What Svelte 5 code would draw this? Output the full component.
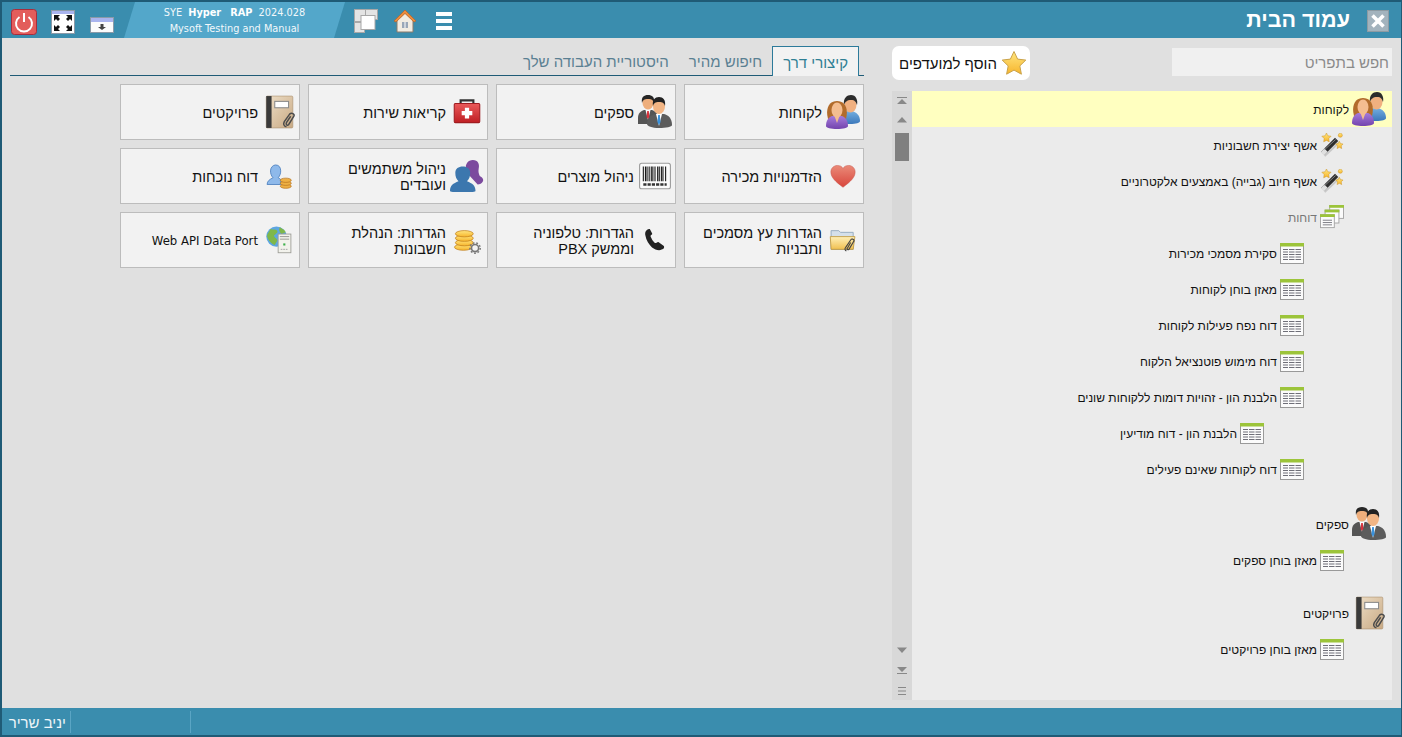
<script>
  const tiles = [
    { icon: "customers", label: "לקוחות" },
    { icon: "suppliers", label: "ספקים" },
    { icon: "medkit", label: "קריאות שירות" },
    { icon: "notebook", label: "פרויקטים" },
    { icon: "heart", label: "הזדמנויות מכירה" },
    { icon: "barcode", label: "ניהול מוצרים" },
    { icon: "people", label: "ניהול משתמשים ועובדים" },
    { icon: "attendance", label: "דוח נוכחות" },
    { icon: "folder", label: "הגדרות עץ מסמכים ותבניות" },
    { icon: "phone", label: "הגדרות: טלפוניה וממשק PBX" },
    { icon: "coins", label: "הגדרות: הנהלת חשבונות" },
    { icon: "globe", label: "Web API Data Port" }
  ];

  const tabs = ["קיצורי דרך", "חיפוש מהיר", "היסטוריית העבודה שלך"];

  const groups = [
    {
      icon: "customers",
      label: "לקוחות",
      active: true,
      gap: 0,
      rows: [
        { level: 1, icon: "wand", label: "אשף יצירת חשבוניות" },
        { level: 1, icon: "wand", label: "אשף חיוב (גבייה) באמצעים אלקטרוניים" },
        { level: 1, icon: "stack", label: "דוחות", muted: true },
        { level: 2, icon: "table", label: "סקירת מסמכי מכירות" },
        { level: 2, icon: "table", label: "מאזן בוחן לקוחות" },
        { level: 2, icon: "table", label: "דוח נפח פעילות לקוחות" },
        { level: 2, icon: "table", label: "דוח מימוש פוטנציאל הלקוח" },
        { level: 2, icon: "table", label: "הלבנת הון - זהויות דומות ללקוחות שונים" },
        { level: 3, icon: "table", label: "הלבנת הון - דוח מודיעין" },
        { level: 2, icon: "table", label: "דוח לקוחות שאינם פעילים" }
      ]
    },
    {
      icon: "suppliers",
      label: "ספקים",
      gap: 19,
      rows: [{ level: 1, icon: "table", label: "מאזן בוחן ספקים" }]
    },
    {
      icon: "notebook",
      label: "פרויקטים",
      gap: 17,
      rows: [{ level: 1, icon: "table", label: "מאזן בוחן פרויקטים" }]
    }
  ];
</script>

<svg class="defs" width="0" height="0" aria-hidden="true">
  <defs>
    <linearGradient id="gold" x1="0" y1="0" x2="0" y2="1">
      <stop offset="0" stop-color="#ffe680" />
      <stop offset="1" stop-color="#f7b52c" />
    </linearGradient>
    <linearGradient id="redbox" x1="0" y1="0" x2="0" y2="1">
      <stop offset="0" stop-color="#ea5a5a" />
      <stop offset="1" stop-color="#bf1f24" />
    </linearGradient>
    <linearGradient id="tan" x1="0" y1="0" x2="1" y2="1">
      <stop offset="0" stop-color="#eedfc8" />
      <stop offset="1" stop-color="#c9aa84" />
    </linearGradient>
    <linearGradient id="heartfill" x1="0" y1="0" x2="0" y2="1">
      <stop offset="0" stop-color="#ea8a78" />
      <stop offset="1" stop-color="#d8453c" />
    </linearGradient>
    <linearGradient id="folderfill" x1="0" y1="0" x2="0" y2="1">
      <stop offset="0" stop-color="#fff0b8" />
      <stop offset="1" stop-color="#f0c050" />
    </linearGradient>
    <linearGradient id="blueman" x1="0" y1="0" x2="0" y2="1">
      <stop offset="0" stop-color="#74aee0" />
      <stop offset="1" stop-color="#3b78bb" />
    </linearGradient>
    <linearGradient id="purple" x1="0" y1="0" x2="0" y2="1">
      <stop offset="0" stop-color="#a57bdb" />
      <stop offset="1" stop-color="#7343ad" />
    </linearGradient>
  </defs>

  <symbol id="customers" viewBox="0 0 34 34">
    <path d="M14 25c0-5 4-8 8-9h4c4 1 8 4 8 10 0 2-4 3-10 3s-10-2-10-4z" fill="url(#blueman)" />
    <ellipse cx="24.500" cy="10" rx="6" ry="7.500" fill="#f0b080" />
    <path d="M18 10c-1-7 3-10 7-10 5 0 7 5 6 10-1-3-2-5-6-5s-6 2-7 5z" fill="#2c2c2c" />
    <path d="M2 24C-1 12 4 6 11 6s12 6 9 18z" fill="#b26c2c" />
    <path d="M0 31c0-6 3-9 6-10h10c3 1 6 4 6 10 0 2-5 3-11 3S0 33 0 31z" fill="url(#purple)" />
    <ellipse cx="11" cy="15" rx="5.500" ry="7.500" fill="#f4bd90" />
    <path d="M8.500 21h5L11 28z" fill="#f4bd90" />
  </symbol>

  <symbol id="suppliers" viewBox="0 0 34 34">
    <path d="M0 23c0-5 3-7 6-8h8c3 1 6 3 6 8v6H0z" fill="#555" />
    <path d="M7.500 15h5L10 25z" fill="#fff" />
    <path d="M9.200 16h1.600l.6 6-1.400 2-1.400-2z" fill="#d8323c" />
    <ellipse cx="10" cy="8" rx="5.500" ry="6.500" fill="#eeae7c" />
    <path d="M4 8c-1-6 2-8 6-8s7 2 6 8c-1-3-2-4-6-4S5 5 4 8z" fill="#262626" />
    <path d="M9 29c0-6 4-9 8-10h9c4 1 8 4 8 11 0 2-6 3-13 3S9 31 9 29z" fill="#5c5c5c" />
    <path d="M18 19h6l-3 12z" fill="#fff" />
    <path d="M20.200 20h1.600l.8 7-1.600 3-1.600-3z" fill="#3a92dc" />
    <ellipse cx="21" cy="11.500" rx="6" ry="7.500" fill="#f2b584" />
    <path d="M15 11c-1-6 2-9 6-9s7 3 6 9c-1-3-2-4-6-4s-5 1-6 4z" fill="#222" />
  </symbol>

  <symbol id="medkit" viewBox="0 0 32 32">
    <path d="M10 9V5h12v4" fill="none" stroke="#333" stroke-width="2" />
    <rect x="4" y="8" width="24" height="18" rx="1" fill="url(#redbox)" stroke="#a01c20" />
    <path d="M14 12h4v3h3v4h-3v3h-4v-3h-3v-4h3z" fill="#fff" />
  </symbol>

  <symbol id="notebook" viewBox="-2 0 32 32">
    <rect x="2" y="1" width="25" height="30" rx="1" fill="url(#tan)" stroke="#ad9474" stroke-width=".6" />
    <rect x="2" y="1" width="5" height="30" fill="#3a3a3a" />
    <rect x="10" y="6" width="13" height="6" fill="#fff" stroke="#8a8a8a" />
    <path d="M21 30c-3-1-3-3-2-5l5-7c2-2 5 0 4 2l-5 8c-1 1-3 0-2-2l4-6" fill="none" stroke="#4c4c4c" stroke-width="1.400" />
  </symbol>

  <symbol id="heart" viewBox="-5 -5 42 42">
    <path d="M16 30C7 23 1 18 1 11c0-5 4-8 8-8 3 0 6 1 7 4 1-3 4-4 7-4 4 0 8 3 8 8 0 7-6 12-15 19z" fill="url(#heartfill)" stroke="#c8544a" stroke-width=".6" />
  </symbol>

  <symbol id="barcode" viewBox="0 0 32 32">
    <rect x="1.500" y="4" width="29" height="24" rx="2" fill="#fbfbfb" stroke="#9a9a9a" />
    <path d="M5 7v14M7 7v14M8.500 7v14M10.500 7v14M12.500 7v14M14 7v14M16 7v14M18.500 7v14M20 7v14M22 7v14M23.500 7v14M26 7v14" stroke="#111" stroke-width="1" />
    <path d="M5 24h22" stroke="#333" stroke-width="2.500" stroke-dasharray="3 1" />
  </symbol>

  <symbol id="people" viewBox="0 0 32 32">
    <path d="M15 10c-1-5 2-9 6.500-9 5 0 6.500 4 5.500 8-.5 3 0 5 1 7 2 1 4 3 3 5-1 2-3 3-5 3l-11-12z" fill="#7c4a9e" />
    <path d="M0 30c0-5 3-7 8-9-2-2-3-4-3-8 0-4 3-6 7-6 4 0 7 2 7 6 0 4-1 6-3 8 5 2 8 4 8 9 0 1-3 1-12 1S0 31 0 30z" fill="#3c77ae" />
  </symbol>

  <symbol id="attendance" viewBox="-4 -4 40 40">
    <path d="M2 26c0-4 3-6 7-8-2-2-3-5-3-8 0-4 3-7 6-7 4 0 6 3 6 7 0 3-1 6-3 8l3 2v6z" fill="#8eb9ea" stroke="#4d7fbe" />
    <g fill="#eeb044" stroke="#b4701c" stroke-width=".8">
      <ellipse cx="24" cy="28" rx="6.500" ry="2.500" />
      <ellipse cx="24" cy="24.500" rx="6.500" ry="2.500" />
      <ellipse cx="24" cy="21" rx="6.500" ry="2.500" />
    </g>
  </symbol>

  <symbol id="folder" viewBox="-4 -4 40 40">
    <path d="M2 5h9l2 2h15v20H2z" fill="#d5e0ea" stroke="#8ea5bb" />
    <path d="M1 12h29l-2 15H2z" fill="url(#folderfill)" stroke="#c09a40" />
    <path d="M20 29c-2-1-2-3-1-4l6-9c1-2 4-1 4 1l-6 10c-1 1-3 0-2-1l4-7" fill="none" stroke="#444" stroke-width="1.300" />
  </symbol>

  <symbol id="phone" viewBox="-7 -7 46 46">
    <path d="M8 1C4 2 2 5 3 10c1 7 5 12 9 16 4 3 9 5 13 3 3-1 4-3 3-5l-7-5c-2-1-3 2-5 1-2-1-5-6-6-9 0-2 3-2 2-4L9 1z" fill="#222" />
  </symbol>

  <symbol id="coins" viewBox="-3 -3 38 38">
    <g fill="url(#gold)" stroke="#c07c18" stroke-width=".8">
      <ellipse cx="12" cy="24" rx="10" ry="3.500" />
      <ellipse cx="13" cy="19" rx="10" ry="3.500" />
      <ellipse cx="13" cy="14" rx="10" ry="3.500" />
      <ellipse cx="13" cy="9" rx="10" ry="3.500" />
    </g>
    <circle cx="25" cy="25" r="4" fill="#f2f2f2" stroke="#777" stroke-width="1.800" />
    <circle cx="25" cy="25" r="5.800" fill="none" stroke="#777" stroke-width="1.600" stroke-dasharray="2 2" />
  </symbol>

  <symbol id="globe" viewBox="-4 -4 40 40">
    <circle cx="13" cy="12" r="12" fill="#5da6e2" />
    <path d="M6 3c3 1 6 0 8 2 1 3-3 4-4 6 1 3 4 3 4 6l-3 5C5 19 2 14 2 10zM17 1c3 2 6 3 7 6l-5 2c-2-2-4-5-2-8z" fill="#7fb84a" />
    <rect x="15" y="9" width="15" height="22" fill="#f2f2ec" stroke="#9a9a94" />
    <path d="M17 12h11M17 15h11" stroke="#8b8b85" />
    <rect x="21" y="20" width="2.500" height="2.500" fill="#3db04a" />
    <path d="M18 27h8" stroke="#999" stroke-dasharray="2 1" />
  </symbol>

  <symbol id="wand" viewBox="0 0 26 26">
    <path d="M5 25L21 10" stroke="#c8c8c8" stroke-width="2" />
    <path d="M3 22L18 7" stroke="#2e2e2e" stroke-width="5" />
    <path d="M2.500 22.500l4-4" stroke="#e0e0e0" stroke-width="5" />
    <path d="M5 18L17 7" stroke="#888" stroke-width="1" />
    <path d="M7 0l1.500 3 3.500.5-2.500 2.500.5 3.500L7 8l-3 1.500.5-3.500L2 3.500 5.500 3z" fill="url(#gold)" stroke="#c89020" stroke-width=".5" />
    <path d="M21 9l1.300 2.500 2.700.4-2 2 .5 3-2.500-1.400-2.500 1.400.5-3-2-2 2.700-.4z" fill="url(#gold)" stroke="#c89020" stroke-width=".5" />
    <circle cx="22" cy="2.500" r="2.200" fill="url(#gold)" stroke="#c89020" stroke-width=".5" />
  </symbol>

  <symbol id="table" viewBox="0 0 24 24">
    <rect x=".500" y="2.500" width="23" height="20" fill="#fbfbfb" stroke="#999" />
    <rect x="0" y="2" width="24" height="3.500" fill="#9cc43a" />
    <path d="M3 8.500h18M3 11h18M3 13.500h18M3 16h18M3 18.500h18" stroke="#6f6f78" />
    <path d="M8.500 7v13M15 7v13" stroke="#fbfbfb" />
  </symbol>

  <symbol id="stack" viewBox="0 0 26 26">
    <rect x="10.500" y=".500" width="15" height="14" fill="#fbfbfb" stroke="#a3a3a3" />
    <rect x="10" y="0" width="16" height="3" fill="#9cc43a" />
    <rect x="5.500" y="5.500" width="15" height="14" fill="#fbfbfb" stroke="#a3a3a3" />
    <rect x="5" y="5" width="16" height="3" fill="#9cc43a" />
    <rect x=".500" y="10.500" width="15" height="14" fill="#fbfbfb" stroke="#a3a3a3" />
    <rect x="0" y="10" width="16" height="3" fill="#9cc43a" />
    <path d="M3 16.500h10M3 19h10M3 21.500h10" stroke="#77777f" />
  </symbol>
</svg>

<div class="app">
  <header class="topbar">
    <div class="tools">
      <button class="power" aria-label="כיבוי">
        <svg viewBox="0 0 26 26" width="26" height="26">
          <rect x=".500" y=".500" width="25" height="25" rx="3" fill="#e35d5b" stroke="#a82c3c" />
          <path d="M8.500 8a8 8 0 1 0 9 0" fill="none" stroke="#fff" stroke-width="2" />
          <path d="M13 4v9" stroke="#fff" stroke-width="2" />
        </svg>
      </button>
      <svg class="full" viewBox="0 0 24 24" width="24" height="24">
        <rect x=".500" y=".500" width="23" height="23" fill="#fff" stroke="#8a9aa8" />
        <rect x="1" y="1" width="22" height="3" fill="#a9b4ee" />
        <path d="M3 6h6l-2 2 2 2-2 2-2-2-2 2zM21 6h-6l2 2-2 2 2 2 2-2 2 2zM3 22h6l-2-2 2-2-2-2-2 2-2-2zM21 22h-6l2-2-2-2 2-2 2 2 2-2z" fill="#111" transform="translate(0 -1)" />
      </svg>
      <svg class="win" viewBox="0 0 24 16" width="24" height="16">
        <rect x=".500" y=".500" width="23" height="15" fill="#fbfbfb" stroke="#8a9aa8" />
        <rect x="1" y="1" width="22" height="4" fill="#a9b4ee" />
        <path d="M10.500 7h3v3h2.500l-4 3-4-3h2.500z" fill="#444" />
      </svg>
      <div class="info">
        <div><span>SYE</span> <b>Hyper</b> <b>RAP</b> <span>2024.028</span></div>
        <div>Mysoft Testing and Manual</div>
      </div>
      <svg class="windows" viewBox="0 0 24 24" width="24" height="24">
        <rect x=".500" y=".500" width="12" height="12" fill="#e4e4e4" stroke="#a8a8a8" />
        <rect x="11.500" y=".500" width="12" height="10" fill="#e4e4e4" stroke="#a8a8a8" />
        <rect x=".500" y="13.500" width="10" height="10" fill="#e4e4e4" stroke="#a8a8a8" />
        <rect x="7" y="6.500" width="14" height="14" fill="#fff" stroke="#a8a8a8" />
      </svg>
      <svg class="home" viewBox="0 0 24 24" width="24" height="24">
        <path d="M4 11v12h16V11l-8-7z" fill="#f2ece2" stroke="#8a7a6a" />
        <path d="M1 12L12 1l11 11-2 1-9-8.500L3 13z" fill="#ec8c3c" stroke="#b5642a" stroke-width=".7" />
        <rect x="9" y="13" width="6" height="6" fill="#9aa7b8" />
        <path d="M12 13v6" stroke="#fff" />
      </svg>
      <svg class="burger" viewBox="0 0 16 18" width="16" height="18">
        <path d="M0 0h16v4H0zM0 7h16v4H0zM0 14h16v4H0z" fill="#fff" />
      </svg>
    </div>
    <div class="title">
      <button class="close" aria-label="סגור">
        <svg viewBox="0 0 22 22" width="22" height="22">
          <rect x=".500" y=".500" width="21" height="21" fill="#a3b3bd" stroke="#8d9ba3" />
          <path d="M5.500 5.500l11 11M16.500 5.500l-11 11" stroke="#fff" stroke-width="3.600" />
        </svg>
      </button>
      <h1>עמוד הבית</h1>
    </div>
  </header>

  <main class="body">
    <aside class="side">
      <div class="side-top">
        <input class="search" type="text" placeholder="חפש בתפריט" />
        <button class="fav">
          <svg viewBox="0 0 26 26" width="26" height="26">
            <path d="M13 1.500l3.600 7.600 8.200 1-6 5.800 1.600 8.300-7.400-4.100-7.400 4.100 1.600-8.300-6-5.800 8.200-1z" fill="url(#gold)" stroke="#c9a24a" />
          </svg>
          הוסף למועדפים
        </button>
      </div>
      <div class="tree-box">
        <div class="tree">
          {#each groups as group}
            <div class="group" style="margin-top: {group.gap}px">
              <div class="row head" class:active={group.active}>
                <svg class="head-icon"><use href="#{group.icon}" /></svg>
                <span>{group.label}</span>
              </div>
              {#each group.rows as row}
                <div class="row" class:muted={row.muted} style="padding-right: {row.level * 40 + 8}px">
                  <svg class="row-icon"><use href="#{row.icon}" /></svg>
                  <span>{row.label}</span>
                </div>
              {/each}
            </div>
          {/each}
        </div>
        <div class="rail">
          <div class="rail-top">
            <svg viewBox="0 0 10 8" width="10" height="8"><path d="M0 0h10v1H0zM5 2l5 5H0z" fill="#888" /></svg>
            <svg viewBox="0 0 10 6" width="10" height="6"><path d="M5 0l5 5.500H0z" fill="#888" /></svg>
            <div class="thumb"></div>
          </div>
          <div class="rail-bottom">
            <svg viewBox="0 0 10 6" width="10" height="6"><path d="M5 6L0 .500h10z" fill="#888" /></svg>
            <svg viewBox="0 0 10 8" width="10" height="8"><path d="M0 7h10v1H0zM5 6L0 1h10z" fill="#888" /></svg>
            <svg viewBox="0 0 8 8" width="8" height="8"><path d="M0 0h8v1H0zM0 3.500h8v1H0zM0 7h8v1H0z" fill="#888" /></svg>
          </div>
        </div>
      </div>
    </aside>

    <section class="content">
      <nav class="tabs">
        {#each tabs as tab, i}
          <div class="tab" class:current={i === 0}>{tab}</div>
        {/each}
      </nav>
      <div class="tiles">
        {#each tiles as tile}
          <div class="tile">
            <svg class="tile-icon"><use href="#{tile.icon}" /></svg>
            <span class:latin={tile.icon === "globe"}>{tile.label}</span>
          </div>
        {/each}
      </div>
    </section>
  </main>

  <footer class="status">
    <div class="user">יניב שריר</div>
    <div class="cell"></div>
  </footer>
</div>

<style>
  :global(body) {
    margin: 0;
    overflow: hidden;
  }

  .defs {
    position: absolute;
  }

  .app {
    box-sizing: border-box;
    width: 1402px;
    height: 737px;
    display: flex;
    flex-direction: column;
    border: 2px solid #1f5b76;
    border-right-width: 1px;
    background: #e0e0e0;
    font-family: "Liberation Sans", "DejaVu Sans", sans-serif;
    color: #111;
  }

  button {
    padding: 0;
    border: 0;
    background: none;
    font: inherit;
  }

  svg {
    display: block;
    flex: none;
  }

  /* top bar */
  .topbar {
    flex: none;
    height: 36px;
    display: flex;
    justify-content: space-between;
    background: #3a8dae;
  }

  .tools {
    display: flex;
    align-items: center;
  }

  .power {
    margin-left: 9px;
    margin-top: 4px;
  }

  .full {
    margin-left: 14px;
    margin-top: 4px;
  }

  .win {
    margin-left: 15px;
    margin-top: 9px;
  }

  .info {
    box-sizing: border-box;
    width: 221px;
    height: 36px;
    margin-left: 10px;
    padding-top: 3px;
    clip-path: polygon(11px 0, 100% 0, 210px 100%, 0 100%);
    background: #53a7ca;
    color: #f2f8fb;
    font-family: "DejaVu Sans", sans-serif;
    font-size: 9.750px;
    line-height: 16px;
    text-align: center;
  }

  .info b {
    margin: 0 3px;
    color: #fff;
  }

  .windows {
    margin-left: 9px;
    margin-top: 2px;
  }

  .home {
    margin-left: 15px;
    margin-top: 2px;
  }

  .burger {
    margin-left: 19px;
    margin-top: 2px;
  }

  .title {
    display: flex;
    flex-direction: row-reverse;
    align-items: center;
    gap: 17px;
    padding-right: 12px;
  }

  .title h1 {
    margin: 0;
    color: #fff;
    font-size: 21.500px;
    font-weight: bold;
    direction: rtl;
  }

  .close {
    margin-top: 2px;
  }

  /* main area */
  .body {
    flex: 1;
    min-height: 0;
    display: flex;
    direction: rtl;
  }

  .side {
    width: 500px;
    margin-right: 9px;
    flex: none;
    display: flex;
    flex-direction: column;
  }

  .side-top {
    box-sizing: border-box;
    height: 53px;
    display: flex;
    justify-content: space-between;
    align-items: flex-start;
    padding-top: 8px;
  }

  .search {
    box-sizing: border-box;
    width: 220px;
    height: 28px;
    margin-top: 2px;
    padding: 0 3px;
    border: 0;
    background: #f0f0f0;
    font: 15px "Liberation Sans", sans-serif;
    direction: rtl;
  }

  .search::placeholder {
    color: #8a8a8a;
  }

  .fav {
    box-sizing: border-box;
    width: 138px;
    height: 34px;
    display: flex;
    align-items: center;
    gap: 4px;
    padding-right: 3px;
    border-radius: 7px;
    background: #fff;
    font-size: 15px;
    color: #111;
  }

  .tree-box {
    height: 609px;
    display: flex;
  }

  .tree {
    flex: 1;
    background: #ebebeb;
    font-size: 12px;
  }

  .row {
    box-sizing: border-box;
    height: 36px;
    display: flex;
    align-items: center;
    gap: 3px;
  }

  .row span {
    margin-top: 1px;
  }

  .row.head {
    padding-right: 6px;
  }

  .row.active {
    background: #ffffc0;
  }

  .row.muted {
    color: #777;
  }

  .head-icon {
    width: 34px;
    height: 34px;
  }

  .row-icon {
    width: 24px;
    height: 24px;
  }

  .rail {
    box-sizing: border-box;
    width: 20px;
    padding-right: 1px;
    display: flex;
    flex-direction: column;
    justify-content: space-between;
    align-items: center;
    background: #d8d8d8;
  }

  .rail-top,
  .rail-bottom {
    display: flex;
    flex-direction: column;
    align-items: center;
  }

  .rail-top {
    padding-top: 6px;
    gap: 12px;
  }

  .rail-bottom {
    padding-bottom: 5px;
    gap: 13px;
  }

  .thumb {
    width: 14px;
    height: 28px;
    margin-top: -2px;
    background: #808080;
  }

  .content {
    flex: none;
    width: 854px;
    margin-right: 28px;
  }

  .tabs {
    box-sizing: border-box;
    height: 38px;
    padding: 8px 5px 0 0;
    display: flex;
    border-bottom: 1px solid #1f5b76;
  }

  .tab {
    padding: 7px 10px 0;
    font-size: 15px;
    color: #5a7f92;
  }

  .tab.current {
    box-sizing: border-box;
    height: 30px;
    border: 1px solid #2c7a9a;
    border-bottom: 0;
    background: #f2f2f2;
    color: #2f7f94;
  }

  .tiles {
    margin-top: 8px;
    display: grid;
    grid-template-columns: repeat(4, 180px);
    grid-auto-rows: 56px;
    gap: 8px;
  }

  .tile {
    box-sizing: border-box;
    display: flex;
    align-items: center;
    gap: 4px;
    padding: 0 3px 0 10px;
    border: 1px solid #bcbcbc;
    background: #f2f2f2;
    font-size: 14.500px;
    line-height: 16px;
  }

  .tile span {
    margin-top: 1px;
  }

  .tile-icon {
    width: 34px;
    height: 34px;
  }

  .latin {
    font-family: "DejaVu Sans", sans-serif;
    font-size: 11.700px;
  }

  /* status bar */
  .status {
    flex: none;
    height: 27px;
    display: flex;
    justify-content: flex-end;
    background: #3a8dae;
    color: #eef5f8;
    font-size: 15px;
    direction: rtl;
  }

  .cell {
    order: -1;
    width: 119px;
    height: 22px;
    margin-top: 3px;
    border-right: 1px solid #5aa5c4;
  }

  .user {
    box-sizing: border-box;
    width: 69px;
    height: 22px;
    margin-top: 3px;
    padding-right: 4px;
    line-height: 23px;
    border-right: 1px solid #5aa5c4;
  }
</style>
